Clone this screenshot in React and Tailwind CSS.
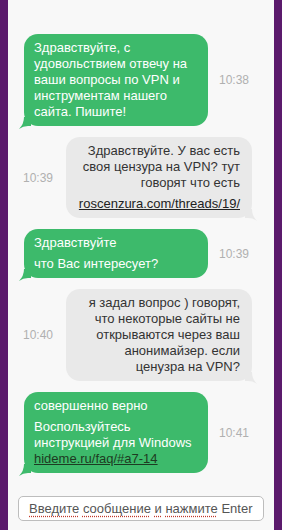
import React from 'react'

const messages = [
  {
    from: 'op',
    time: '10:38',
    parts: [['Здравствуйте, с удовольствием отвечу на ваши вопросы по VPN и инструментам нашего сайта. Пишите!']],
  },
  {
    from: 'me',
    time: '10:39',
    parts: [['Здравствуйте. У вас есть своя цензура на VPN? тут говорят что есть'], ['roscenzura.com/threads/19/', true]],
  },
  {
    from: 'op',
    time: '10:39',
    parts: [['Здравствуйте'], ['что Вас интересует?']],
  },
  {
    from: 'me',
    time: '10:40',
    parts: [['я задал вопрос ) говорят, что некоторые сайты не открываются через ваш анонимайзер. если ценузра на VPN?']],
  },
  {
    from: 'op',
    time: '10:41',
    parts: [['совершенно верно'], ['Воспользуйтесь инструкцией для Windows', false, ['hideme.ru/faq/#a7-14']]],
  },
]

function Tail({ side, color }) {
  if (side === 'left') {
    return (
      <svg width="12" height="12" viewBox="0 0 12 12" className="absolute -left-[5px] -bottom-[3px]">
        <path d="M5 0 H12 V9 H9 Q4 9 0 12 Q5 7 5 0 Z" fill={color} />
      </svg>
    )
  }
  return (
    <svg width="12" height="12" viewBox="0 0 12 12" className="absolute -right-[5px] -bottom-[3px]">
      <path d="M7 0 H0 V9 H3 Q8 9 12 12 Q7 7 7 0 Z" fill={color} />
    </svg>
  )
}

function Bubble({ msg }) {
  const op = msg.from === 'op'
  return (
    <div
      className={
        op
          ? 'relative w-[184px] rounded-[14px] bg-[#3dba6b] pl-[10px] pr-3 py-[6px] text-white'
          : 'relative w-[186px] rounded-[14px] bg-[#e9e9e9] pl-3 pr-[12px] py-[6px] text-right text-[#333]'
      }
    >
      {msg.parts.map(([text, link, extra], i) => (
        <p key={i} className={i > 0 ? 'mt-[5px]' : ''}>
          {link ? <span className="underline text-[#222]">{text}</span> : text}
          {extra && (
            <>
              <br />
              <span className="underline text-[#1d3b22]">{extra[0]}</span>
            </>
          )}
        </p>
      ))}
      <Tail side={op ? 'left' : 'right'} color={op ? '#3dba6b' : '#e9e9e9'} />
    </div>
  )
}

function Row({ msg }) {
  const time = <span className="text-[12px] text-[#b0b0b0]">{msg.time}</span>
  if (msg.from === 'op') {
    return (
      <div className="flex items-center pl-4">
        <Bubble msg={msg} />
        <div className="pl-[11px]">{time}</div>
      </div>
    )
  }
  return (
    <div className="flex items-center pl-[15px]">
      <div className="w-[43px]">{time}</div>
      <Bubble msg={msg} />
    </div>
  )
}

export default function App() {
  const words = ['Введите', 'сообщение', 'и', 'нажмите']
  return (
    <div
      className="flex h-[530px] w-[282px] bg-[#5b1a6c] px-[8px] text-[13px] leading-[16px]"
      style={{ fontFamily: '"Liberation Sans", Arial, sans-serif' }}
    >
      <div className="flex w-[268px] flex-col bg-[#f8f8f8]">
        <div className="flex flex-col gap-[11px] pt-[34px]">
          {messages.map((m, i) => (
            <Row key={i} msg={m} />
          ))}
        </div>
        <div className="mt-auto px-[10px] pb-[9px]">
          <div className="h-[25px] whitespace-nowrap rounded-[5px] border border-[#bdbdbd] bg-white px-[10px] text-[13px] leading-[23px] text-[#555]">
            {words.map((w) => (
              <React.Fragment key={w}>
                <span className="underline decoration-dotted decoration-[#c0392b] underline-offset-[3px]">{w}</span>{' '}
              </React.Fragment>
            ))}
            <span>Enter</span>
          </div>
        </div>
      </div>
    </div>
  )
}
